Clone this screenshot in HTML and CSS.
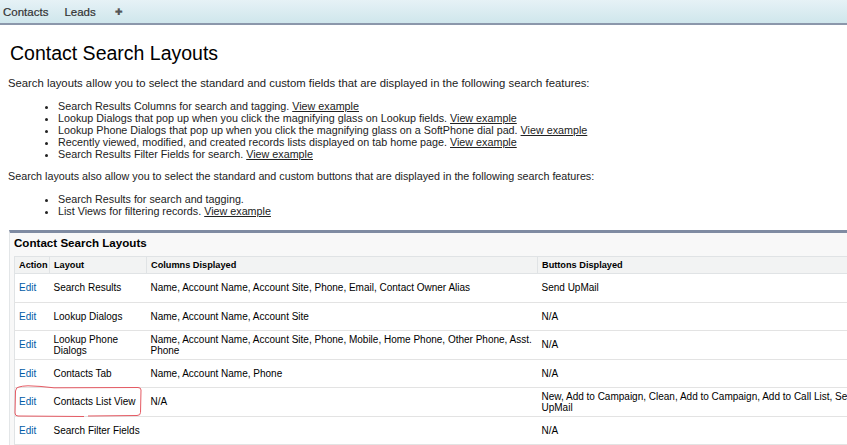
FILE: index.html
```html
<!DOCTYPE html>
<html lang="en">
<head>
    <meta charset="UTF-8">
    <title>Contact Search Layouts</title>
    <link rel="stylesheet" href="styles.css">
</head>
<body>
    <div class="tab-bar">
        <a href="#">Contacts</a>
        <a href="#">Leads</a>
        <a href="#" class="plus">&#10010;</a>
    </div>

    <div class="page">
        <h1>Contact Search Layouts</h1>
        <p class="intro">Search layouts allow you to select the standard and custom fields that are displayed in the following search features:</p>
        <ul>
            <li>Search Results Columns for search and tagging. <a href="#">View example</a></li>
            <li>Lookup Dialogs that pop up when you click the magnifying glass on Lookup fields. <a href="#">View example</a></li>
            <li>Lookup Phone Dialogs that pop up when you click the magnifying glass on a SoftPhone dial pad. <a href="#">View example</a></li>
            <li>Recently viewed, modified, and created records lists displayed on tab home page. <a href="#">View example</a></li>
            <li>Search Results Filter Fields for search. <a href="#">View example</a></li>
        </ul>
        <p>Search layouts also allow you to select the standard and custom buttons that are displayed in the following search features:</p>
        <ul>
            <li>Search Results for search and tagging.</li>
            <li>List Views for filtering records. <a href="#">View example</a></li>
        </ul>

        <div class="panel">
            <h2>Contact Search Layouts</h2>
            <div class="table-wrap">
                <table>
                    <colgroup>
                        <col class="col-action">
                        <col class="col-layout">
                        <col class="col-columns">
                        <col class="col-buttons">
                    </colgroup>
                    <tr class="head">
                        <th>Action</th>
                        <th>Layout</th>
                        <th>Columns Displayed</th>
                        <th>Buttons Displayed</th>
                    </tr>
                    <tr>
                        <td><a href="#">Edit</a></td>
                        <td>Search Results</td>
                        <td>Name, Account Name, Account Site, Phone, Email, Contact Owner Alias</td>
                        <td>Send UpMail</td>
                    </tr>
                    <tr>
                        <td><a href="#">Edit</a></td>
                        <td>Lookup Dialogs</td>
                        <td>Name, Account Name, Account Site</td>
                        <td>N/A</td>
                    </tr>
                    <tr>
                        <td><a href="#">Edit</a></td>
                        <td>Lookup Phone Dialogs</td>
                        <td>Name, Account Name, Account Site, Phone, Mobile, Home Phone, Other Phone, Asst. Phone</td>
                        <td>N/A</td>
                    </tr>
                    <tr>
                        <td><a href="#">Edit</a></td>
                        <td>Contacts Tab</td>
                        <td>Name, Account Name, Phone</td>
                        <td>N/A</td>
                    </tr>
                    <tr>
                        <td><a href="#">Edit</a></td>
                        <td>Contacts List View</td>
                        <td>N/A</td>
                        <td>New, Add to Campaign, Clean, Add to Campaign, Add to Call List, Send UpMail</td>
                    </tr>
                    <tr>
                        <td><a href="#">Edit</a></td>
                        <td>Search Filter Fields</td>
                        <td></td>
                        <td>N/A</td>
                    </tr>
                </table>
                <!-- hand drawn highlight around the list view row -->
                <svg class="marker" width="130" height="34" viewBox="0 0 130 34">
                    <path d="M5 2 Q2 2 1.5 6 L1 28 Q1 31 4 31 L70 31.5 M74 31 L123 30.5 Q126.5 30.5 126.5 27.5 L127 5 Q127 2.5 124 2.5 L40 2.8 Q25 1 14 0.8 Q8 1 5 2" fill="none" stroke="#e55a63" stroke-width="1"/>
                </svg>
            </div>
        </div>
    </div>
</body>
</html>
```

FILE: styles.css
```css
html, body {
    margin: 0;
    padding: 0;
    overflow: hidden;
}
body {
    font-family: Arial, "Liberation Sans", sans-serif;
    font-size: 10.75px;
    color: #222;
    background-color: #fff;
    width: 847px;
    height: 445px;
}
.tab-bar {
    height: 23px;
    background: linear-gradient(#e6f2f6, #cfe6ec);
    border-bottom: 2px solid #8b97ab;
    display: flex;
    align-items: center;
    padding-left: 3px;
}
.tab-bar a {
    color: #333;
    text-decoration: none;
    font-size: 11.5px;
    margin-right: 16px;
    -webkit-text-stroke: 0.2px #333;
}
.tab-bar a.plus {
    font-size: 9px;
    color: #555;
    margin-left: 3px;
}
.page {
    padding: 0 0 0 8px;
}
h1 {
    font-size: 19.5px;
    font-weight: normal;
    color: #000;
    margin: 16px 0 12px 2px;
    line-height: 24px;
}
p {
    margin: 0 0 10px 0;
    line-height: 13px;
}
p.intro {
    font-size: 11.3px;
}
ul {
    margin: 0 0 10px 0;
    padding-left: 50px;
    line-height: 12px;
}
ul li {
    list-style: disc;
}
ul a {
    color: #222;
}
.panel {
    margin-top: 13px;
    margin-left: 1px;
    width: 900px;
    background-color: #f8f8f8;
    border-top: 3px solid #7f8ba2;
    border-left: 1px solid #e3e6e8;
    padding: 0 0 8px 4px;
}
.panel h2 {
    font-size: 11.6px;
    font-weight: bold;
    color: #000;
    margin: 0;
    line-height: 14px;
    padding: 3px 0 6px 0;
}
.table-wrap {
    position: relative;
}
table {
    border-collapse: collapse;
    table-layout: fixed;
    width: 870px;
    background-color: #fff;
    border: 1px solid #e0e3e5;
}
.col-action {
    width: 35px;
}
.col-layout {
    width: 97px;
}
.col-columns {
    width: 391px;
}
.col-buttons {
    width: 347px;
}
tr {
    height: 28.5px;
}
tr.head {
    height: 17px;
}
th {
    background-color: #f2f3f3;
    font-size: 9.2px;
    font-weight: bold;
    color: #000;
    text-align: left;
    padding: 0 2px 0 4px;
    border-bottom: 1px solid #e0e3e5;
    border-left: 1px solid #e0e3e5;
}
td {
    padding: 2px 2px 2px 4px;
    font-size: 10px;
    line-height: 11px;
    vertical-align: middle;
    border-bottom: 1px solid #e3e3e3;
    color: #000;
}
td a {
    color: #015ba7;
    text-decoration: none;
}
.marker {
    position: absolute;
    left: 0;
    top: 129px;
}
```
